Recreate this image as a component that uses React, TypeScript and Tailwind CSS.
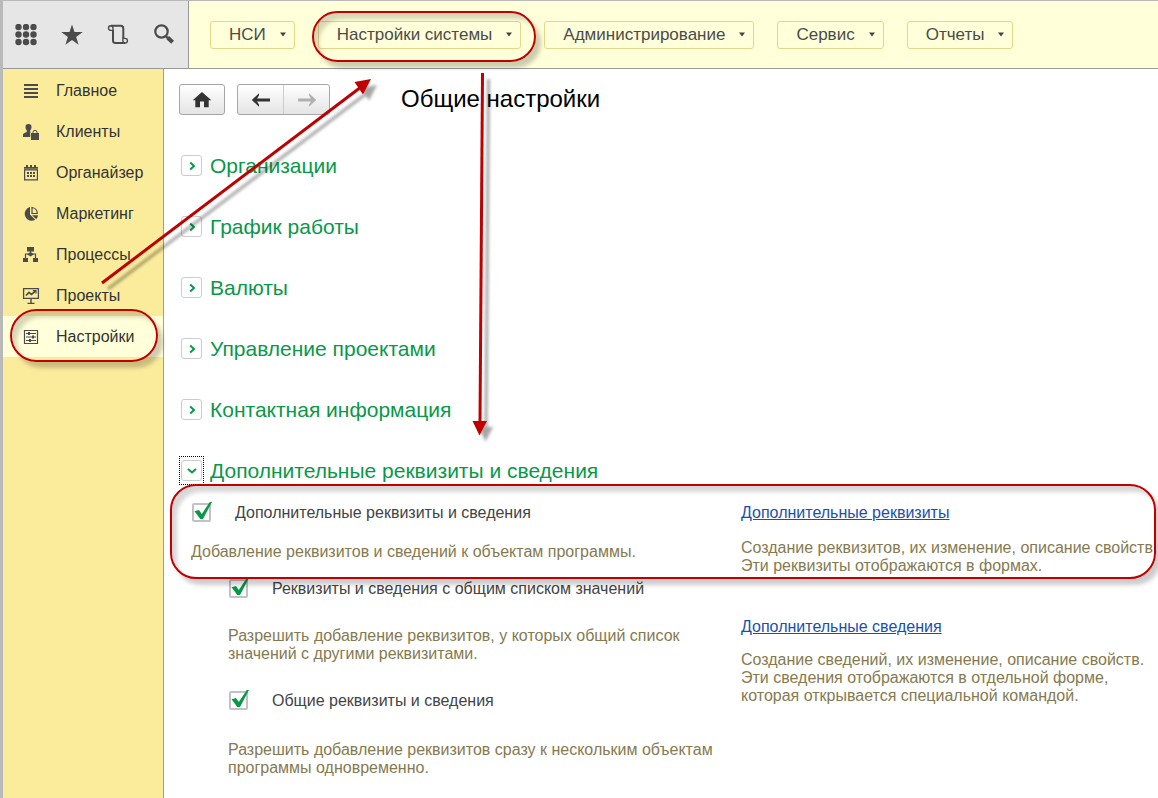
import React, { useState } from "react";

type IconProps = { className?: string };

function AppsIcon() {
  const steps = [3.5, 11, 18.5];
  return (
    <svg width="22" height="22" viewBox="0 0 22 22" fill="#4b4b4b" aria-hidden="true">
      {steps.map((y) => steps.map((x) => <circle key={`${x}-${y}`} cx={x} cy={y - 0.5} r="3.2" />))}
    </svg>
  );
}

function StarIcon() {
  return (
    <svg width="22" height="22" viewBox="0 0 22 22" fill="#4b4b4b" aria-hidden="true">
      <path d="M11 .5l2.500 7.500h8.200l-6.600 4.900 2.500 7.900L11 16l-6.600 4.800 2.500-7.900L.3 8h8.200z" />
    </svg>
  );
}

function ScrollIcon() {
  return (
    <svg width="22" height="22" viewBox="0 0 22 22" fill="none" stroke="#4b4b4b" aria-hidden="true">
      <path d="M4 1.800h9.700q2.600 0 2.600 2.600V14" strokeWidth="2" />
      <path d="M3.800 1.800a2.300 2.300 0 1 0 0 4.600H6V4.100a2.300 2.300 0 0 0-2.200-2.300z" strokeWidth="1.400" />
      <path d="M6 6v10.500q0 2.500 2.600 2.500H18" strokeWidth="2" />
      <path d="M18.100 19a2.300 2.300 0 1 0 0-4.600h-2.200v2.300a2.300 2.300 0 0 0 2.200 2.300z" strokeWidth="1.400" />
    </svg>
  );
}

function SearchIcon() {
  return (
    <svg width="22" height="22" viewBox="0 0 22 22" fill="none" stroke="#4b4b4b" aria-hidden="true">
      <circle cx="8.500" cy="7.500" r="6.200" strokeWidth="2.200" />
      <path d="M12.800 12l2 2" strokeWidth="2.400" />
      <path d="M14.600 13.500l5 4.800" strokeWidth="4" />
    </svg>
  );
}

const sideSvg = { width: 18, height: 18, viewBox: "0 0 18 18", fill: "#4b4b4b", "aria-hidden": true } as const;

function ListIcon() {
  return (
    <svg {...sideSvg}>
      <path d="M2 2h14v2H2zM2 6h14v2H2zM2 10h14v2H2zM2 14h14v2H2z" />
    </svg>
  );
}

function ClientsIcon() {
  return (
    <svg {...sideSvg}>
      <path d="M6.500 1a3 3 0 0 1 3 3.200c0 1.600-.8 2.600-1.300 3.300v1.200l1 .5V14H1v-2.500c0-1.300 2.600-1.800 3.800-2.800V7.500C4.300 6.800 3.500 5.800 3.500 4.200a3 3 0 0 1 3-3.200z" />
      <path d="M8.200 9.200H18V18H8.200z" fill="#fbec9c" />
      <path d="M9 10h8v7H9z" />
      <path d="M11 10.500V9.300a2 2 0 0 1 4 0v1.200" fill="none" stroke="#4b4b4b" />
    </svg>
  );
}

function CalendarIcon() {
  return (
    <svg {...sideSvg}>
      <path d="M2 3h14v13.500H2zM3.200 6.500v8.800h11.600V6.500z" fillRule="evenodd" />
      <path d="M4 1h2v3H4zM8 1h2v3H8zM12 1h2v3h-2z" />
      <path d="M2 4.600h14v.7H2z" fill="#fbec9c" opacity=".6" />
      <path d="M5 8h2v2H5zM8 8h2v2H8zM11 8h2v2h-2zM5 11h2v2H5zM8 11h2v2H8zM11 11h2v2h-2z" />
    </svg>
  );
}

function PieIcon() {
  return (
    <svg {...sideSvg}>
      <path d="M8 2v7.500l5.300 5.300A7 7 0 1 1 8 2z" />
      <path d="M10 2.500a6 6 0 0 1 5.300 6H10z" fill="none" stroke="#4b4b4b" strokeWidth="1.200" />
      <path d="M10 10.300h6a7 7 0 0 1-1.700 4z" />
    </svg>
  );
}

function ProcessIcon() {
  return (
    <svg {...sideSvg}>
      <path d="M5 1h7v4.500H5zM1 12h5v4H1zM11 12h5v4h-5zM8.500 6l3.500 2.200-3.500 2.300L5 8.200z" />
      <path d="M8.500 5v2M6.500 8H3.500v4M10.500 8h3v4" fill="none" stroke="#4b4b4b" strokeWidth="1.200" />
    </svg>
  );
}

function ProjectIcon() {
  return (
    <svg {...sideSvg} fill="none" stroke="#4b4b4b">
      <path d="M1.600 1.600h14.800v9.800H1.600z" strokeWidth="1.300" />
      <path d="M4 8.500l3-3 2.500 2 4-3.500" strokeWidth="1.700" />
      <path d="M10.800 3.500h3.200v3" strokeWidth="1.200" />
      <path d="M9 11.500V16M5.500 16.400h7" strokeWidth="1.400" />
    </svg>
  );
}

function SettingsIcon() {
  return (
    <svg {...sideSvg} fill="none" stroke="#4b4b4b">
      <path d="M2.500 2.500h13v13h-13z" strokeWidth="1.200" />
      <path d="M4 5.500h10M4 9h10M4 12.500h10" />
      <path d="M7 4v3M11 7.500v3M8 11v3" strokeWidth="2" />
    </svg>
  );
}

function HomeIcon() {
  return (
    <svg width="20" height="18" viewBox="0 0 20 18" fill="#333" aria-hidden="true">
      <path d="M10 1l9.300 8.300H16.700V16.300H12V10.500H8v5.800H3.300V9.300H.7z" />
    </svg>
  );
}

function ArrowIcon({ className }: IconProps) {
  return (
    <svg className={className} width="20" height="14" viewBox="0 0 20 14" fill="currentColor" aria-hidden="true">
      <path d="M.8 7L8 .2V2.500L6 5.400h13v3.200H6L8 11.500v2.300z" />
    </svg>
  );
}

const menu = ["НСИ", "Настройки системы", "Администрирование", "Сервис", "Отчеты"];

const sections = [
  { label: "Главное", Icon: ListIcon },
  { label: "Клиенты", Icon: ClientsIcon },
  { label: "Органайзер", Icon: CalendarIcon },
  { label: "Маркетинг", Icon: PieIcon },
  { label: "Процессы", Icon: ProcessIcon },
  { label: "Проекты", Icon: ProjectIcon },
  { label: "Настройки", Icon: SettingsIcon, active: true },
];

const groups = [
  { label: "Организации" },
  { label: "График работы" },
  { label: "Валюты" },
  { label: "Управление проектами" },
  { label: "Контактная информация" },
  { label: "Дополнительные реквизиты и сведения", open: true },
];

const tools = [
  { label: "Меню функций", Icon: AppsIcon },
  { label: "Избранное", Icon: StarIcon },
  { label: "История", Icon: ScrollIcon },
  { label: "Поиск", Icon: SearchIcon },
];

function Option({ label }: { label: string }) {
  const [checked, setChecked] = useState(true);
  return (
    <label className="flex h-5 items-center gap-6 text-[#444]">
      <span className="relative block size-5 shrink-0 pl-px">
        <input
          type="checkbox"
          checked={checked}
          onChange={() => setChecked(!checked)}
          className="block size-[19px] appearance-none rounded-[2px] border-2 border-[#c2c2c2] bg-white"
        />
        {checked && (
          <svg className="pointer-events-none absolute -top-0.5 left-px" width="21" height="20" viewBox="0 0 21 20" fill="#089848" aria-hidden="true">
            <path d="M2.500 10.200L7 9l2.800 4L17.800 1H20l-9 17H8.300z" />
          </svg>
        )}
      </span>
      {label}
    </label>
  );
}

function Callout({ className }: IconProps) {
  return (
    <div
      className={`pointer-events-none absolute border-2 border-[#be0000] shadow-[5px_6px_4px_rgba(0,0,0,0.2),inset_5px_6px_4px_rgba(0,0,0,0.16)] ${className}`}
    />
  );
}

export default function App() {
  return (
    <div className="relative flex min-h-screen flex-col overflow-hidden border-t border-l-3 border-t-[#b9b9b9] border-l-[#b9b9b9] bg-white font-['Liberation_Sans',Arial,sans-serif] text-base leading-[18px]">
      <header className="flex h-17 border-b border-[#999]">
        <div className="flex w-[186px] shrink-0 items-center gap-6 border-r border-[#999] bg-[#e6e6e6] pl-3">
          {tools.map(({ label, Icon }) => (
            <button key={label} aria-label={label}>
              <Icon />
            </button>
          ))}
        </div>
        <nav className="flex grow items-center gap-[23px] bg-[#ffffd9] pl-[21px]">
          {menu.map((label) => (
            <button
              key={label}
              className="flex h-7 items-center gap-3.5 rounded-[3px] border border-[#e6d68a] pr-2 pl-[18px] text-[17px] whitespace-nowrap text-[#4b4b4b]"
            >
              {label}
              <svg width="6" height="5" viewBox="0 0 6 5" fill="#444" aria-hidden="true">
                <path d="M0 .5h6L3 4.500z" />
              </svg>
            </button>
          ))}
        </nav>
      </header>

      <div className="flex grow">
        <aside className="w-[161px] shrink-0 border-r border-[#b8a52c] bg-[#fbec9c] pt-px">
          {sections.map(({ label, Icon, active }) => (
            <a
              key={label}
              href="#"
              className={`flex h-[41px] items-center gap-4 pl-[19px] text-[#333] ${active ? "bg-[#ffffd9]" : ""}`}
            >
              <Icon />
              {label}
            </a>
          ))}
        </aside>

        <main className="grow pt-[15px] pl-[15px]">
          <div className="flex items-center">
            <button
              aria-label="Начальная страница"
              className="flex h-[31px] w-[46px] items-center justify-center rounded-[3px] border border-[#a6a6a6] bg-linear-to-b from-white to-[#e4e4e4]"
            >
              <HomeIcon />
            </button>
            <div className="ml-3 flex h-[31px] w-[93px] rounded-[3px] border border-[#a6a6a6] bg-linear-to-b from-white to-[#e4e4e4]">
              <button aria-label="Назад" className="flex grow items-center justify-center border-r border-[#ccc] text-[#333]">
                <ArrowIcon />
              </button>
              <button aria-label="Вперед" className="flex grow items-center justify-center text-[#b0b0b0]">
                <ArrowIcon className="rotate-180" />
              </button>
            </div>
            <h1 className="ml-[71px] pb-0.5 text-2xl leading-6 text-black">Общие настройки</h1>
          </div>

          <div className="mt-10 flex flex-col gap-10">
            {groups.map(({ label, open }) => (
              <h2 key={label} className="flex h-[21px] items-center gap-2 pl-0.5 text-[21px] text-[#089848]">
                <span className={open ? "py-0.5 outline-1 outline-offset-1 outline-dotted outline-black" : ""}>
                  <button
                    aria-label={label}
                    aria-expanded={Boolean(open)}
                    className="flex size-[21px] items-center justify-center rounded-[3px] border border-[#ccc] bg-white"
                  >
                    <svg width="10" height="10" viewBox="0 0 10 10" fill="none" stroke="currentColor" strokeWidth="2" aria-hidden="true">
                      <path d={open ? "M1 3l4 3.500L9 3" : "M3.200 1.500L7 5 3.200 8.500"} />
                    </svg>
                  </button>
                </span>
                {label}
              </h2>
            ))}
          </div>

          <div className="mt-[22px] grid grid-cols-[550px_1fr] pl-3 text-[#857a50]">
            <div>
              <Option label="Дополнительные реквизиты и сведения" />
              <p className="mt-5">Добавление реквизитов и сведений к объектам программы.</p>
              <div className="mt-[18px] pl-[37px]">
                <Option label="Реквизиты и сведения с общим списком значений" />
                <p className="mt-7">
                  Разрешить добавление реквизитов, у которых общий список
                  <br />
                  значений с другими реквизитами.
                </p>
                <div className="mt-7">
                  <Option label="Общие реквизиты и сведения" />
                </div>
                <p className="mt-[30px]">
                  Разрешить добавление реквизитов сразу к нескольким объектам
                  <br />
                  программы одновременно.
                </p>
              </div>
            </div>
            <div>
              <a href="#" className="block h-5 leading-5 text-[#1a4fae] underline">
                Дополнительные реквизиты
              </a>
              <p className="mt-4">
                Создание реквизитов, их изменение, описание свойств.
                <br />
                Эти реквизиты отображаются в формах.
              </p>
              <a href="#" className="mt-[42px] block h-5 leading-5 text-[#1a4fae] underline">
                Дополнительные сведения
              </a>
              <p className="mt-[14px]">
                Создание сведений, их изменение, описание свойств.
                <br />
                Эти сведения отображаются в отдельной форме,
                <br />
                которая открывается специальной командой.
              </p>
            </div>
          </div>
        </main>
      </div>

      <Callout className="top-[10px] left-[309px] h-[51px] w-[224px] rounded-[26px]" />
      <Callout className="top-[308px] left-[7px] h-[53px] w-[148px] rounded-[27px]" />
      <Callout className="top-[483px] left-[167px] h-[95px] w-[986px] rounded-[26px]" />
      <svg
        className="pointer-events-none absolute -top-px -left-[3px]"
        width="560"
        height="460"
        viewBox="0 0 560 460"
        fill="#be0000"
        aria-hidden="true"
      >
        <defs>
          <filter id="arrow-shadow" x="-10%" y="-10%" width="130%" height="130%">
            <feDropShadow dx="6" dy="6" stdDeviation="1.8" floodColor="#000" floodOpacity="0.35" />
          </filter>
        </defs>
        <g filter="url(#arrow-shadow)">
          <path d="M102 283L361 87" stroke="#be0000" strokeWidth="3" />
          <path d="M371 79L354.500 82L363 94.500z" />
          <path d="M482.500 73L480 424" stroke="#be0000" strokeWidth="3" />
          <path d="M472.500 421H487L479.500 435.500z" />
        </g>
      </svg>
    </div>
  );
}
